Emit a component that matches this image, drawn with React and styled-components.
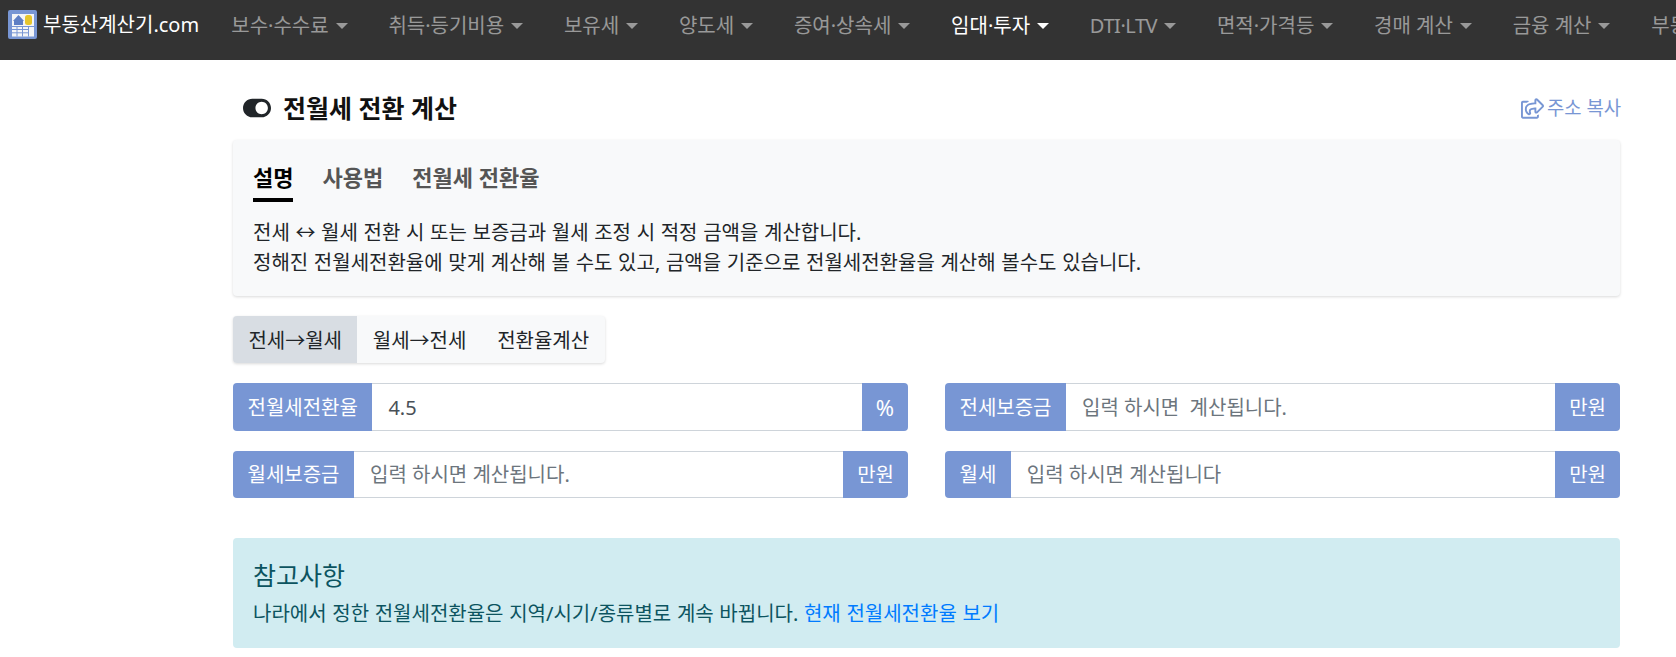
import React from 'react'
import styled, { createGlobalStyle } from 'styled-components'
import { FaToggleOn, FaRegShareSquare } from 'react-icons/fa'

const GlobalStyle = createGlobalStyle`
  html, body {
    margin: 0;
    padding: 0;
    height: 657px;
    overflow: hidden;
    background: #fff;
  }
  * { box-sizing: border-box; }
  body {
    font-family: "Noto Sans", "Noto Sans CJK KR", sans-serif;
    font-size: 20px;
    line-height: 1.5;
    color: #212529;
  }
`

const Navbar = styled.nav`
  display: flex;
  align-items: flex-start;
  height: 60px;
  padding: 10px 0 0 8px;
  background: #333;
  overflow: hidden;
  white-space: nowrap;
`

const Brand = styled.a`
  display: flex;
  align-items: center;
  gap: 6px;
  height: 29px;
  margin-right: 11.7px;
  color: #fff;
  font-size: 20px;
  flex-shrink: 0;
`

const NavItem = styled.a`
  display: flex;
  align-items: center;
  height: 31px;
  padding: 1px 20.4px 0;
  color: ${(p) => (p.$active ? '#fff' : 'rgba(255, 255, 255, 0.5)')};
  font-size: 20px;
  letter-spacing: ${(p) => (p.$tight ? '-0.45px' : 'normal')};
  flex-shrink: 0;
  &::after {
    content: '';
    margin-left: 7px;
    border-top: 6px solid;
    border-left: 6px solid transparent;
    border-right: 6px solid transparent;
  }
`

const Main = styled.main`
  width: 1387px;
  margin-left: 233px;
`

const TitleRow = styled.div`
  display: flex;
  align-items: center;
  justify-content: space-between;
  height: 80px;
  padding: 16px 0 0 10px;
`

const Title = styled.h1`
  display: flex;
  align-items: center;
  gap: 12px;
  margin: 0;
  font-size: 25px;
  font-weight: 700;
  line-height: 38px;
  color: #111;
  svg { font-size: 28px; color: #212529; }
`

const CopyLink = styled.a`
  display: flex;
  align-items: center;
  gap: 3px;
  margin-right: -1px;
  color: #7896d4;
  font-size: 18.8px;
  svg { font-size: 23px; }
`

const InfoCard = styled.section`
  height: 156px;
  padding: 20px;
  background: #f8f9fa;
  border-radius: 4px;
  box-shadow: 0 1px 3px rgba(0, 0, 0, 0.15);
`

const TabBar = styled.div`
  display: flex;
  gap: 29px;
  margin-bottom: 16px;
`

const Tab = styled.a`
  padding-bottom: 4px;
  font-size: 22px;
  font-weight: 700;
  line-height: 34px;
  color: ${(p) => (p.$active ? '#000' : '#555')};
  border-bottom: 4px solid ${(p) => (p.$active ? '#000' : 'transparent')};
`

const InfoText = styled.p`
  margin: 0;
  font-size: 20px;
  line-height: 30px;
  word-spacing: 0.45px;
`

const ModeGroup = styled.div`
  display: inline-flex;
  height: 47px;
  margin-top: 20px;
  background: #f8f9fa;
  border-radius: 4px;
  box-shadow: 0 1px 3px rgba(0, 0, 0, 0.15);
  vertical-align: top;
`

const ModeButton = styled.button`
  padding: 2px 15.4px 0;
  border: 0;
  border-radius: ${(p) => (p.$active ? '4px 0 0 4px' : '0')};
  background: ${(p) => (p.$active ? '#d8dde3' : 'transparent')};
  color: #212529;
  font: inherit;
`

const FormGrid = styled.div`
  display: grid;
  grid-template-columns: 675px 675px;
  column-gap: 37px;
  row-gap: 20px;
  margin-top: 20px;
`

const InputGroup = styled.div`
  display: flex;
  height: 47.5px;
`

const Addon = styled.span`
  display: flex;
  align-items: center;
  padding: 2px ${(p) => (p.$end ? '14px' : '14.5px')} 0;
  background: #7896d4;
  color: #fff;
  font-size: ${(p) => (p.$symbol ? '22px' : '20px')};
  border-radius: ${(p) => (p.$end ? '0 4px 4px 0' : '4px 0 0 4px')};
  flex-shrink: 0;
`

const Field = styled.input`
  flex: 1;
  min-width: 0;
  padding: 2px 16px 0;
  border: 1px solid #ced4da;
  border-width: 1px 0;
  color: #495057;
  font: inherit;
  outline: none;
  &::placeholder { color: #6c757d; opacity: 1; }
`

const Notice = styled.section`
  height: 110px;
  margin-top: 40px;
  padding: 18px 20px 0;
  background: #d1ecf1;
  border-radius: 4px;
  color: #0c5460;
`

const NoticeTitle = styled.h4`
  margin: 0 0 5px;
  font-size: 25px;
  font-weight: 400;
  line-height: 38px;
`

const NoticeText = styled.p`
  margin: 0;
  line-height: 30px;
  word-spacing: 0.45px;
  a { color: #007bff; }
`

function Logo() {
  return (
    <svg width="29" height="29" viewBox="0 0 29 29">
      <rect width="29" height="29" rx="2" fill="#7896d4" />
      <rect x="4" y="4" width="22" height="22.500" fill="#f4f5f7" />
      <path d="M5 11 L10.500 5 L16 11 L15 11 L15 15 L6 15 L6 11Z" fill="#5f7fc4" />
      <rect x="17" y="5" width="7" height="10" rx="2.500" fill="#e6c52c" />
      <path d="M4 19.500h17M4 22.800h17M4 16.500h22" stroke="#7896d4" strokeWidth="1" />
      <path d="M9 16v10.500M14.500 16v10.500M20.500 16v10.500" stroke="#7896d4" strokeWidth="1" />
    </svg>
  )
}

const menus = ['보수·수수료', '취득·등기비용', '보유세', '양도세', '증여·상속세', '임대·투자', 'DTI·LTV', '면적·가격등', '경매 계산', '금융 계산', '부동산']

export default function App() {
  return (
    <>
      <GlobalStyle />
      <Navbar>
        <Brand>
          <Logo />
          부동산계산기.com
        </Brand>
        {menus.map((m) => (
          <NavItem key={m} $active={m === '임대·투자'} $tight={m === 'DTI·LTV'}>
            {m}
          </NavItem>
        ))}
      </Navbar>
      <Main>
        <TitleRow>
          <Title>
            <FaToggleOn />
            전월세 전환 계산
          </Title>
          <CopyLink>
            <FaRegShareSquare />
            주소 복사
          </CopyLink>
        </TitleRow>
        <InfoCard>
          <TabBar>
            <Tab $active>설명</Tab>
            <Tab>사용법</Tab>
            <Tab>전월세 전환율</Tab>
          </TabBar>
          <InfoText>
            전세 ↔ 월세 전환 시 또는 보증금과 월세 조정 시 적정 금액을 계산합니다.
            <br />
            정해진 전월세전환율에 맞게 계산해 볼 수도 있고, 금액을 기준으로 전월세전환율을 계산해 볼수도 있습니다.
          </InfoText>
        </InfoCard>
        <ModeGroup>
          <ModeButton $active>전세→월세</ModeButton>
          <ModeButton>월세→전세</ModeButton>
          <ModeButton>전환율계산</ModeButton>
        </ModeGroup>
        <FormGrid>
          <InputGroup>
            <Addon>전월세전환율</Addon>
            <Field defaultValue="4.5" />
            <Addon $end $symbol>%</Addon>
          </InputGroup>
          <InputGroup>
            <Addon>전세보증금</Addon>
            <Field placeholder="입력 하시면  계산됩니다." />
            <Addon $end>만원</Addon>
          </InputGroup>
          <InputGroup>
            <Addon>월세보증금</Addon>
            <Field placeholder="입력 하시면 계산됩니다." />
            <Addon $end>만원</Addon>
          </InputGroup>
          <InputGroup>
            <Addon>월세</Addon>
            <Field placeholder="입력 하시면 계산됩니다" />
            <Addon $end>만원</Addon>
          </InputGroup>
        </FormGrid>
        <Notice>
          <NoticeTitle>참고사항</NoticeTitle>
          <NoticeText>
            나라에서 정한 전월세전환율은 지역/시기/종류별로 계속 바뀝니다. <a>현재 전월세전환율 보기</a>
          </NoticeText>
        </Notice>
      </Main>
    </>
  )
}
